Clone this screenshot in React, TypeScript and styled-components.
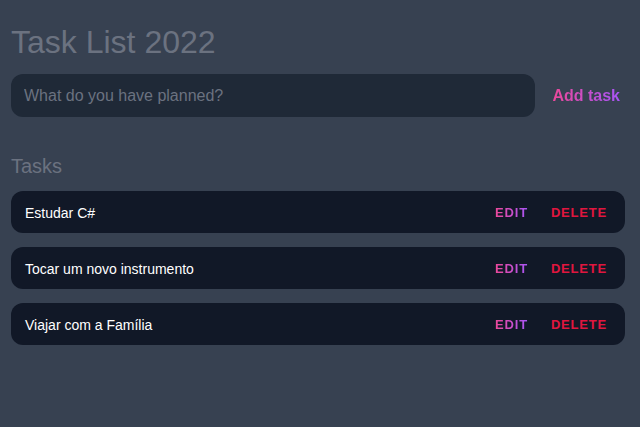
import React from "react";
import styled, { createGlobalStyle } from "styled-components";

const Global = createGlobalStyle`
  html, body { margin: 0; padding: 0; background: #374151; }
  body { font-family: "Liberation Sans", Arial, sans-serif; }
  * { box-sizing: border-box; }
`;

const Page = styled.div`
  min-height: 427px;
  background: #374151;
  padding: 24px 15px 0 11px;
`;

const Title = styled.h1`
  margin: 0;
  font-size: 32px;
  font-weight: 400;
  color: #6b7280;
  line-height: 36px;
`;

const Form = styled.form`
  display: flex;
  align-items: center;
  gap: 17px;
  margin-top: 14px;
`;

const Input = styled.input`
  flex: 1;
  height: 43px;
  border: none;
  outline: none;
  border-radius: 12px;
  background: #1f2937;
  padding: 0 13px;
  font-family: "Liberation Sans", Arial, sans-serif;
  font-size: 16px;
  color: #e5e7eb;
  &::placeholder { color: #6b7280; }
`;

const Gradient = styled.span`
  background: linear-gradient(to right, #ec4899, #a855f7);
  -webkit-background-clip: text;
  background-clip: text;
  color: transparent;
`;

const AddButton = styled.button`
  border: none;
  background: none;
  padding: 0;
  font-family: "Liberation Sans", Arial, sans-serif;
  font-size: 16px;
  font-weight: 700;
  cursor: pointer;
  margin-right: 5px;
`;

const SectionTitle = styled.h2`
  margin: 35px 0 0;
  font-size: 20px;
  font-weight: 400;
  color: #6b7280;
  line-height: 28px;
`;

const List = styled.div`
  display: flex;
  flex-direction: column;
  gap: 14px;
  margin-top: 11px;
`;

const Task = styled.div`
  display: flex;
  align-items: center;
  height: 42px;
  border-radius: 12px;
  background: #111827;
  padding: 1px 18px 0 14px;
`;

const TaskText = styled.span`
  flex: 1;
  color: #ffffff;
  font-size: 14px;
`;

const Actions = styled.div`
  display: flex;
  gap: 23px;
`;

const ActionButton = styled.button<{ $danger?: boolean }>`
  border: none;
  background: none;
  padding: 0;
  font-family: "Liberation Sans", Arial, sans-serif;
  font-size: 13px;
  font-weight: 700;
  letter-spacing: 0.8px;
  text-transform: uppercase;
  color: ${(p) => (p.$danger ? "#e0163f" : "inherit")};
  cursor: pointer;
`;

const tasks = ["Estudar C#", "Tocar um novo instrumento", "Viajar com a Família"];

export default function App() {
  return (
    <Page>
      <Global />
      <Title>Task List 2022</Title>
      <Form onSubmit={(e) => e.preventDefault()}>
        <Input placeholder="What do you have planned?" />
        <AddButton type="submit">
          <Gradient>Add task</Gradient>
        </AddButton>
      </Form>
      <SectionTitle>Tasks</SectionTitle>
      <List>
        {tasks.map((t) => (
          <Task key={t}>
            <TaskText>{t}</TaskText>
            <Actions>
              <ActionButton>
                <Gradient>Edit</Gradient>
              </ActionButton>
              <ActionButton $danger>Delete</ActionButton>
            </Actions>
          </Task>
        ))}
      </List>
    </Page>
  );
}
